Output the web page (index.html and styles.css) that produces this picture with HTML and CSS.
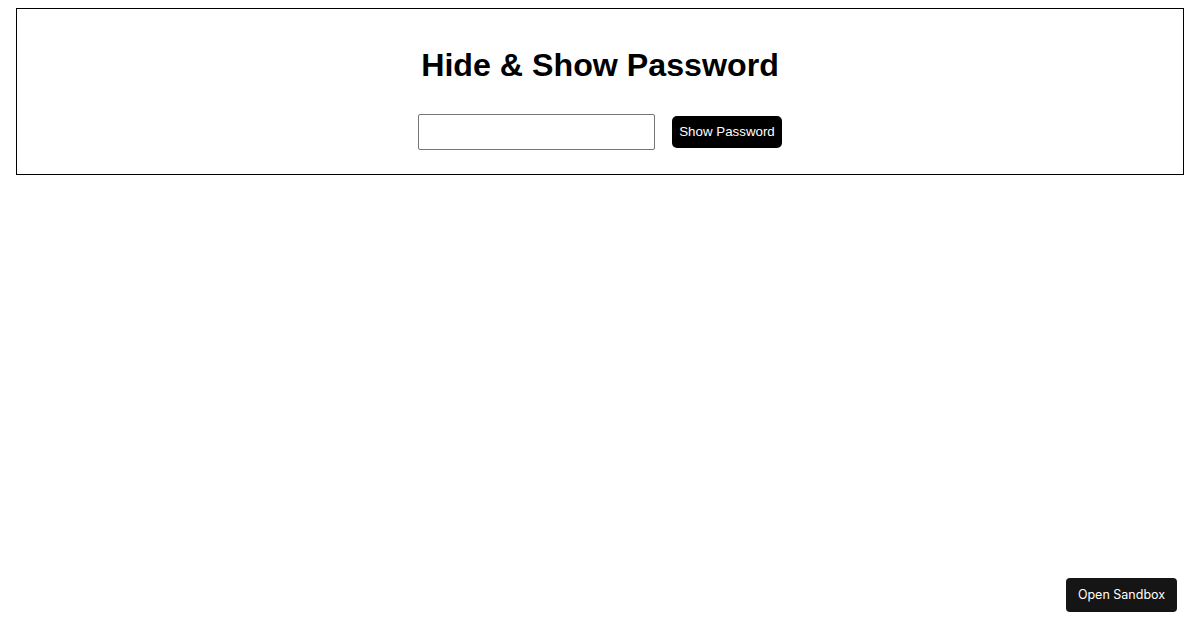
FILE: index.html
```html
<!DOCTYPE html>
<html>
<head>
<meta charset="utf-8">
<link rel="stylesheet" href="styles.css">
</head>
<body>
<div class="card">
  <h1 class="title">Hide &amp; Show Password</h1>
  <div class="row">
    <input class="field" type="password">
    <button class="toggle">Show Password</button>
  </div>
</div>
<a class="sandbox">Open Sandbox</a>
</body>
</html>
```
FILE: styles.css
```css
html, body { margin: 0; background: #fff; }
body { padding: 8px; font-family: "Liberation Sans", Arial, sans-serif; }
.card {
  margin: 0 8px;
  border: 1px solid #000;
  padding: 16px;
  text-align: center;
}
.title {
  font-size: 32.2px;
  font-weight: bold;
  margin: 22px 0 22px;
  line-height: 37px;
  color: #000;
}
.row {
  display: flex;
  justify-content: center;
  align-items: center;
  gap: 17px;
  padding: 8px 0;
}
.field {
  width: 237px;
  height: 36px;
  box-sizing: border-box;
  border: 1px solid #767676;
  border-radius: 2px;
  margin: 0;
}
.toggle {
  height: 32px;
  width: 110px;
  box-sizing: border-box;
  background: #000;
  color: #fff;
  border: none;
  border-radius: 5px;
  font-family: "Liberation Sans", Arial, sans-serif;
  font-size: 13.333px;
  padding: 0 0 2px;
}
.sandbox {
  position: fixed;
  right: 23px;
  bottom: 18px;
  width: 111px;
  height: 34px;
  box-sizing: border-box;
  display: flex;
  align-items: center;
  justify-content: center;
  padding-bottom: 2px;
  background: #151515;
  color: #fff;
  border-radius: 4px;
  font-family: Inter, "Liberation Sans", sans-serif;
  font-size: 12.5px;
}
```
